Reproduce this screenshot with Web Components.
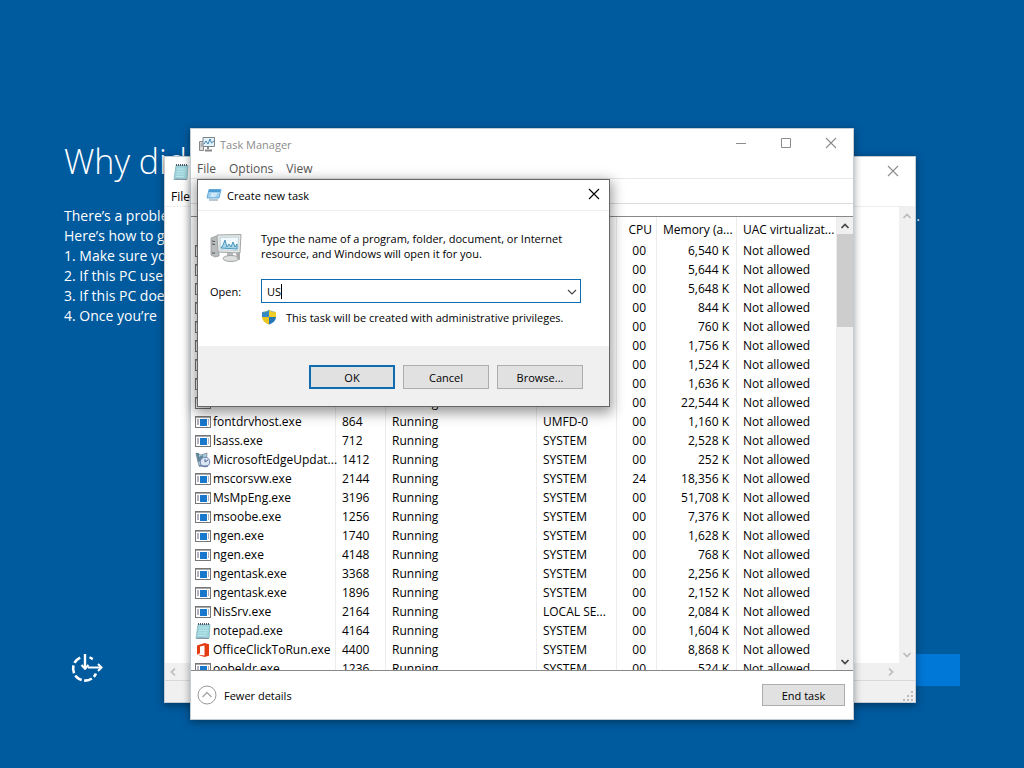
<!DOCTYPE html>
<html lang="en">
<head>
<meta charset="utf-8">
<title>Desktop</title>
<style>
  html, body { height: 100%; }
  body { margin: 0; background: #005a9e; font: 12px/15px "Open Sans", "Noto Sans", sans-serif; color: #000; overflow: hidden; }
</style>
</head>
<body>
<setup-desktop>
  <notepad-window></notepad-window>
  <task-manager></task-manager>
  <run-dialog></run-dialog>
</setup-desktop>

<script>
const ICONS = {
  exe: `<svg width="16" height="16" viewBox="0 0 16 16"><rect x=".5" y="2.500" width="15" height="11" fill="#fff" stroke="#777"/><path d="M1 3.500h14" stroke="#aaa"/><rect x="5" y="5" width="7" height="7" fill="#1878cc"/><path d="M2 6h2M2 8h2M2 10h2M13 6h1M13 8h1M13 10h1" stroke="#668"/></svg>`,
  notepad: `<svg width="16" height="18" viewBox="0 0 16 18"><path d="M3 2.500h12l-1 14H1z" fill="#9ed5dc" stroke="#7fb4bb" stroke-width=".8"/><path d="M3 15.500l11 .5-1 1-12-.4z" fill="#889"/><path d="M4 6h9M4 8.500h9M3.500 11H12M3 13.500h8" stroke="#b9e4e9"/><path d="M3.500 1v2M5.500 1v2M7.500 1v2M9.500 1v2M11.500 1v2M13.500 1v2" stroke="#556"/></svg>`,
  office: `<svg width="16" height="16" viewBox="0 0 16 16"><path d="M2 3.500 9.500 1 14 2.300v11.500L9.500 15 2 12.600l7.500.8V3.600L5 4.600v6.700l-3 1.300z" fill="#e43c12"/></svg>`,
  edge: `<svg width="16" height="16" viewBox="0 0 16 16"><path d="M1 1l5 2 6-2-1 12-7 1-1-4z" fill="#a4cfdf" stroke="#778" stroke-width=".7"/><path d="M1 1h3v4l4-2v5L3 10z" fill="#5f8798"/><circle cx="10" cy="10" r="4.800" fill="#dbe6f4" stroke="#6c7fae"/><path d="M10 7v3l3-2M4 14h9" stroke="#556a94" fill="none"/></svg>`,
  manager: `<svg width="16" height="16" viewBox="0 0 16 16"><path d="M.5 5.500h4v9h-4zM1.500 8h2M1.500 10h2" fill="#ddd" stroke="#888"/><path d="M4 1.500h11.500v9H4z" fill="#e2f0f7" stroke="#7b858c"/><path d="M5 8l2-3 2 3 2-5 1.500 4L15 5" fill="none" stroke="#4389b5"/><path d="M9 11v2M6 14.500h7" stroke="#888" stroke-width="2"/></svg>`,
  run: `<svg width="16" height="14" viewBox="0 0 16 14"><path d="M3 1.500h12l-2 8.500H1z" fill="#9fd0ef" stroke="#64a9dc"/><path d="M3 3h11" stroke="#4a9ad4" stroke-width="2"/><path d="M5 6h6M4.500 8h5" stroke="#fff"/><path d="M3 12h9" stroke="#b9c8d2" stroke-width="2"/></svg>`,
  computer: `<svg width="34" height="34" viewBox="0 0 34 34"><path d="M1 7l5-2 3 1v19l-4 1-4-2z" fill="#b9bcbd" stroke="#8e9192" stroke-width=".7"/><path d="M2 10l3 .6M2 13l3 .6M2 22h3" stroke="#555"/><path d="M7 4 31 3.500 30 22 8 21z" fill="#e6e8e8" stroke="#a2a6a7"/><path d="M10 6.500 28.500 6 27.700 19.500 10.500 18.600z" fill="#f3fafd" stroke="#a9c5d1" stroke-width=".7"/><path d="M11 17l2-3 2-5 2 7 2-3 2 3 2-5 2 5 2-3v5l-16-1z" fill="#a8d6e9" stroke="#3b8db5" stroke-width=".9"/><path d="M17 22h6v4h-6z" fill="#b6b8b9"/><ellipse cx="21" cy="27.500" rx="8" ry="3" fill="#dedfdf" stroke="#a2a4a5"/><path d="M26 22l4-1v8l-3-1z" fill="#aaa"/></svg>`,
  shield: `<svg width="16" height="16" viewBox="0 0 16 16"><path d="M8 1C6 2.600 3.500 3 1 3v5h7z" fill="#3488c4"/><path d="M8 1c2 1.600 4.500 2 7 2v5H8z" fill="#f2ce27"/><path d="M1 8c.5 4 3 6 7 7.500V8z" fill="#eac51f"/><path d="M15 8c-.5 4-3 6-7 7.500V8z" fill="#2478b5"/><path d="M2 3c2 0 4-.5 6-2 2 1.500 4 2 6 2" fill="none" stroke="#84b58a" stroke-width=".8"/></svg>`,
  close: `<svg width="12" height="12" viewBox="0 0 12 12"><path d="M1 1l10 10M11 1L1 11" stroke="currentColor" stroke-width="1.100" fill="none"/></svg>`,
  maximize: `<svg width="12" height="12" viewBox="0 0 12 12"><path d="M1.500 1.500h9v9h-9z" stroke="currentColor" fill="none"/></svg>`,
  minimize: `<svg width="12" height="12" viewBox="0 0 12 12"><path d="M1 6.500h10" stroke="currentColor" fill="none"/></svg>`,
  up: `<svg width="10" height="8" viewBox="0 0 10 8"><path d="M1.500 6 5 2.500 8.500 6" stroke="currentColor" stroke-width="1.700" fill="none"/></svg>`,
  down: `<svg width="10" height="8" viewBox="0 0 10 8"><path d="M1.500 2 5 5.500 8.500 2" stroke="currentColor" stroke-width="1.700" fill="none"/></svg>`,
  expand: `<svg width="10" height="8" viewBox="0 0 10 8"><path d="M1 2l4 4 4-4" stroke="currentColor" stroke-width="1.100" fill="none"/></svg>`,
  left: `<svg width="8" height="10" viewBox="0 0 8 10"><path d="M6 1.500 2.500 5 6 8.500" stroke="currentColor" stroke-width="1.700" fill="none"/></svg>`,
  right: `<svg width="8" height="10" viewBox="0 0 8 10"><path d="M2 1.500 5.500 5 2 8.500" stroke="currentColor" stroke-width="1.700" fill="none"/></svg>`,
  fewer: `<svg width="20" height="20" viewBox="0 0 20 20"><circle cx="10" cy="10" r="9" fill="#fff" stroke="#999"/><path d="M5.500 12 10 7.500l4.500 4.500" fill="none" stroke="#aaa" stroke-width="1.500"/></svg>`,
  grip: `<svg width="12" height="12" viewBox="0 0 12 12"><path d="M8 1h2v2H8zM8 5h2v2H8zM8 9h2v2H8zM4 5h2v2H4zM4 9h2v2H4zM0 9h2v2H0z" fill="#bbb"/></svg>`,
  ease: `<svg width="34" height="34" viewBox="1 -3 34 34" fill="none" stroke="#fff"><path d="M11.200 3.600A12 12 0 1 0 27 19.500" stroke-width="2.600" stroke-dasharray="8 2.500"/><path d="M16 0v14" stroke-width="2.400"/><path d="M12.500 11 16 14.700l3.500-3.700" stroke-width="2.200"/><path d="M19 13.500h13" stroke-width="2"/><path d="M29 10l3.500 3.500-3.500 3.500" stroke-width="2"/><path d="M20.500 3.300l3.300 1.800" stroke-width="2.400"/></svg>`
};

class UiIcon extends HTMLElement {
  connectedCallback() {
    if (this.shadowRoot) return;
    this.attachShadow({ mode: "open" }).innerHTML =
      `<style>:host{display:inline-flex;flex:none;align-items:center;justify-content:center}svg{display:block}</style>${ICONS[this.getAttribute("name")]}`;
  }
}
customElements.define("ui-icon", UiIcon);

class PushButton extends HTMLElement {
  connectedCallback() {
    if (this.shadowRoot) return;
    this.attachShadow({ mode: "open" }).innerHTML = `
      <style>
        :host { display: block; width: 86px; height: 24px; font-size: 11px; }
        button { width: 100%; height: 100%; padding: 0; box-sizing: border-box; border: 1px solid #adadad; background: #e1e1e1; font: inherit; color: inherit; }
        :host([default]) button { border: 2px solid #0f6cb0; }
      </style>
      <button type="button"><slot></slot></button>`;
  }
}
customElements.define("push-button", PushButton);

class TitleBar extends HTMLElement {
  connectedCallback() {
    if (this.shadowRoot) return;
    const buttons = this.getAttribute("buttons").split(" ")
      .map(n => `<button type="button" aria-label="${n}"><ui-icon name="${n}"></ui-icon></button>`).join("");
    this.attachShadow({ mode: "open" }).innerHTML = `
      <style>
        :host { display: flex; align-items: center; height: 30px; flex: none; padding-left: 8px; gap: 5px; background: #fff; color: #8c8c8c; font-size: 11px; }
        nav { display: flex; margin-left: auto; height: 100%; }
        button { width: 45px; border: 0; padding: 0; background: none; color: inherit; }
        :host([compact]) button { width: 31px; }
      </style>
      <ui-icon name="${this.getAttribute("icon")}"></ui-icon><span><slot></slot></span><nav>${buttons}</nav>`;
  }
}
customElements.define("title-bar", TitleBar);

class ScrollRail extends HTMLElement {
  connectedCallback() {
    if (this.shadowRoot) return;
    const h = this.hasAttribute("horizontal");
    this.attachShadow({ mode: "open" }).innerHTML = `
      <style>
        :host { display: flex; flex: none; flex-direction: ${h ? "row" : "column"}; background: #f0f0f0; color: #bbb; }
        button { flex: none; width: 16px; height: 17px; border: 0; padding: 0; background: none; color: inherit; display: grid; place-items: center; }
        div { flex: 1; }
        i { display: block; height: 93px; background: #cdcdcd; }
      </style>
      <button type="button" aria-label="Back"><ui-icon name="${h ? "left" : "up"}"></ui-icon></button>
      <div>${this.hasAttribute("thumb") ? "<i></i>" : ""}</div>
      <button type="button" aria-label="Forward"><ui-icon name="${h ? "right" : "down"}"></ui-icon></button>`;
  }
}
customElements.define("scroll-rail", ScrollRail);

const ROWS = [
  ["exe", "", "", "", "", "00", "6,540 K"],
  ["exe", "", "", "", "", "00", "5,644 K"],
  ["exe", "", "", "", "", "00", "5,648 K"],
  ["exe", "", "", "", "", "00", "844 K"],
  ["exe", "", "", "", "", "00", "760 K"],
  ["exe", "", "", "", "", "00", "1,756 K"],
  ["exe", "", "", "", "", "00", "1,524 K"],
  ["exe", "", "", "", "", "00", "1,636 K"],
  ["exe", "", "", "Running", "", "00", "22,544 K"],
  ["exe", "fontdrvhost.exe", "864", "Running", "UMFD-0", "00", "1,160 K"],
  ["exe", "lsass.exe", "712", "Running", "SYSTEM", "00", "2,528 K"],
  ["edge", "MicrosoftEdgeUpdat...", "1412", "Running", "SYSTEM", "00", "252 K"],
  ["exe", "mscorsvw.exe", "2144", "Running", "SYSTEM", "24", "18,356 K"],
  ["exe", "MsMpEng.exe", "3196", "Running", "SYSTEM", "00", "51,708 K"],
  ["exe", "msoobe.exe", "1256", "Running", "SYSTEM", "00", "7,376 K"],
  ["exe", "ngen.exe", "1740", "Running", "SYSTEM", "00", "1,628 K"],
  ["exe", "ngen.exe", "4148", "Running", "SYSTEM", "00", "768 K"],
  ["exe", "ngentask.exe", "3368", "Running", "SYSTEM", "00", "2,256 K"],
  ["exe", "ngentask.exe", "1896", "Running", "SYSTEM", "00", "2,152 K"],
  ["exe", "NisSrv.exe", "2164", "Running", "LOCAL SE...", "00", "2,084 K"],
  ["notepad", "notepad.exe", "4164", "Running", "SYSTEM", "00", "1,604 K"],
  ["office", "OfficeClickToRun.exe", "4400", "Running", "SYSTEM", "00", "8,868 K"],
  ["exe", "oobeldr.exe", "1236", "Running", "SYSTEM", "00", "524 K"]
];

class ProcessTable extends HTMLElement {
  connectedCallback() {
    if (this.shadowRoot) return;
    const body = ROWS.map(([icon, name, pid, status, user, cpu, mem]) =>
      `<tr><td><div><ui-icon name="${icon}"></ui-icon>${name}</div></td><td>${pid}</td><td>${status}</td><td>${user}</td><td class="r c">${cpu}</td><td class="r">${mem}</td><td>Not allowed</td></tr>`).join("");
    this.attachShadow({ mode: "open" }).innerHTML = `
      <style>
        :host { display: block; overflow: hidden; flex: 1; }
        table { width: 100%; table-layout: fixed; border-collapse: separate; border-spacing: 0; }
        th, td { box-sizing: border-box; height: 19px; padding: 0 6px; border-right: 1px solid #ececec; text-align: left; font-weight: 400; line-height: 15px; white-space: nowrap; }
        th { height: 24px; }
        td:first-child { padding: 0 0 0 4px; }
        td div { display: flex; align-items: center; gap: 2px; height: 19px; }
        .r { text-align: right; }
        td.r { padding-right: 7px; }
        td.c { padding-right: 10px; }
        th.c { padding-right: 4px; }
      </style>
      <table>
        <colgroup><col style="width:145px"><col style="width:50px"><col><col style="width:80px"><col style="width:40px"><col style="width:80px"><col style="width:100px"></colgroup>
        <thead><tr><th></th><th></th><th></th><th></th><th class="r c">CPU</th><th class="r">Memory (a...</th><th>UAC virtualizat...</th></tr></thead>
        <tbody>${body}</tbody>
      </table>`;
  }
}
customElements.define("process-table", ProcessTable);

class TaskManager extends HTMLElement {
  connectedCallback() {
    if (this.shadowRoot) return;
    this.attachShadow({ mode: "open" }).innerHTML = `
      <style>
        :host { position: absolute; inset: 128px 170px 48px 190px; box-sizing: border-box; display: flex; flex-direction: column; background: #fff; border: 1px solid #c3ccd3; box-shadow: 0 2px 8px rgba(0,0,0,.4); }
        .menu { display: flex; gap: 13px; height: 19px; flex: none; padding-left: 6px; align-items: center; color: #555; border-bottom: 1px solid #e8e8e8; }
        .tabs { height: 24px; flex: none; border-bottom: 1px solid #dcdcdc; }
        .list { display: flex; flex: 1; min-height: 0; margin-top: 12px; border: solid #888; border-width: 1px 0; }
        scroll-rail { color: #444; }
        footer { display: flex; flex: none; align-items: center; justify-content: space-between; height: 48px; padding: 0 8px 0 6px; }
        .fewer { display: flex; align-items: center; gap: 7px; padding: 0; border: 0; background: none; font: inherit; font-size: 11px; color: inherit; }
        push-button { width: 83px; height: 22px; }
      </style>
      <title-bar icon="manager" buttons="minimize maximize close">Task Manager</title-bar>
      <div class="menu"><span>File</span><span>Options</span><span>View</span></div>
      <div class="tabs"></div>
      <div class="list"><process-table></process-table><scroll-rail thumb></scroll-rail></div>
      <footer><button class="fewer" type="button"><ui-icon name="fewer"></ui-icon>Fewer details</button><push-button>End task</push-button></footer>`;
  }
}
customElements.define("task-manager", TaskManager);

class NotepadWindow extends HTMLElement {
  connectedCallback() {
    if (this.shadowRoot) return;
    this.attachShadow({ mode: "open" }).innerHTML = `
      <style>
        :host { position: absolute; inset: 156px 108px 65px 164px; box-sizing: border-box; display: flex; flex-direction: column; background: #fff; border: 1px solid #c3ccd3; box-shadow: 0 2px 8px rgba(0,0,0,.4); }
        .menu { height: 19px; flex: none; padding-left: 6px; line-height: 19px; border-bottom: 1px solid #eee; }
        .page { display: flex; justify-content: flex-end; flex: 1; min-height: 0; }
        .base { display: flex; flex: none; padding-right: 16px; background: #f0f0f0; }
        .base scroll-rail { flex: 1; }
        .status { display: flex; justify-content: flex-end; align-items: flex-end; height: 21px; flex: none; border-top: 1px solid #d9d9d9; background: #f0f0f0; }
      </style>
      <title-bar icon="notepad" buttons="close"></title-bar>
      <div class="menu">File</div>
      <div class="page"><scroll-rail></scroll-rail></div>
      <div class="base"><scroll-rail horizontal></scroll-rail></div>
      <div class="status"><ui-icon name="grip"></ui-icon></div>`;
  }
}
customElements.define("notepad-window", NotepadWindow);

class RunDialog extends HTMLElement {
  connectedCallback() {
    if (this.shadowRoot) return;
    this.attachShadow({ mode: "open" }).innerHTML = `
      <style>
        :host { position: absolute; top: 179px; left: 197px; width: 413px; box-sizing: border-box; background: #fff; border: 1px solid #666; box-shadow: 0 4px 12px 2px rgba(0,0,0,.4); font-size: 11px; }
        title-bar { color: #000; border-bottom: 1px solid #eee; }
        .body { display: grid; grid-template-columns: 51px minmax(0, 1fr); padding: 20px 28px 17px 12px; }
        .body > ui-icon { justify-self: start; }
        p { margin: 0; }
        .text { line-height: 15px; white-space: nowrap; }
        label { align-self: center; margin-top: 14px; }
        .combo { display: flex; align-items: center; height: 24px; box-sizing: border-box; margin-top: 14px; padding-left: 5px; border: 1px solid #0f6cb0; }
        input { field-sizing: content; border: 0; outline: 0; padding: 0; font: inherit; background: none; }
        .caret { width: 1px; height: 15px; background: #000; }
        .combo button { margin-left: auto; width: 17px; border: 0; padding: 0; background: none; color: #444; }
        .admin { grid-column: 2; display: flex; align-items: center; gap: 9px; height: 24px; margin-top: 2px; white-space: nowrap; }
        footer { display: flex; justify-content: flex-end; gap: 8px; padding: 19px 26px 17px; background: #f0f0f0; }
      </style>
      <title-bar icon="run" buttons="close" compact>Create new task</title-bar>
      <div class="body">
        <ui-icon name="computer"></ui-icon>
        <p class="text">Type the name of a program, folder, document, or Internet<br>resource, and Windows will open it for you.</p>
        <label for="open">Open:</label>
        <div class="combo"><input id="open" type="text" value="US"><span class="caret"></span><button type="button" aria-label="History"><ui-icon name="expand"></ui-icon></button></div>
        <div class="admin"><ui-icon name="shield"></ui-icon><span>This task will be created with administrative privileges.</span></div>
      </div>
      <footer><push-button default>OK</push-button><push-button>Cancel</push-button><push-button>Browse...</push-button></footer>`;
  }
}
customElements.define("run-dialog", RunDialog);

class SetupDesktop extends HTMLElement {
  connectedCallback() {
    if (this.shadowRoot) return;
    this.attachShadow({ mode: "open" }).innerHTML = `
      <style>
        :host { position: relative; display: flex; flex-direction: column; height: 100%; box-sizing: border-box; padding: 136px 64px 80px; color: #fff; }
        ::slotted(*) { color: #000; }
        h1 { margin: 0; font-size: 34px; line-height: 50px; font-weight: 300; white-space: nowrap; }
        .intro { margin-top: 20px; margin-right: 40px; font-size: 14px; line-height: 20px; white-space: nowrap; }
        p { margin: 0; }
        .row { display: flex; justify-content: space-between; }
        .bar { display: flex; justify-content: space-between; align-items: center; margin-top: auto; }
        .next { width: 120px; height: 32px; border: 0; background: #0078d7; }
        .ease { padding: 0 0 0 6px; border: 0; background: none; }
      </style>
      <h1>Why did</h1>
      <div class="intro">
        <p class="row"><span>There’s a problem</span><span>.</span></p>
        <p>Here’s how to get</p>
        <p>1. Make sure your</p>
        <p>2. If this PC uses</p>
        <p>3. If this PC does</p>
        <p>4. Once you’re</p>
      </div>
      <div class="bar"><button class="ease" type="button" aria-label="Ease of access"><ui-icon name="ease"></ui-icon></button><button class="next" type="button" aria-label="Next"></button></div>
      <slot></slot>`;
  }
}
customElements.define("setup-desktop", SetupDesktop);
</script>
</body>
</html>
